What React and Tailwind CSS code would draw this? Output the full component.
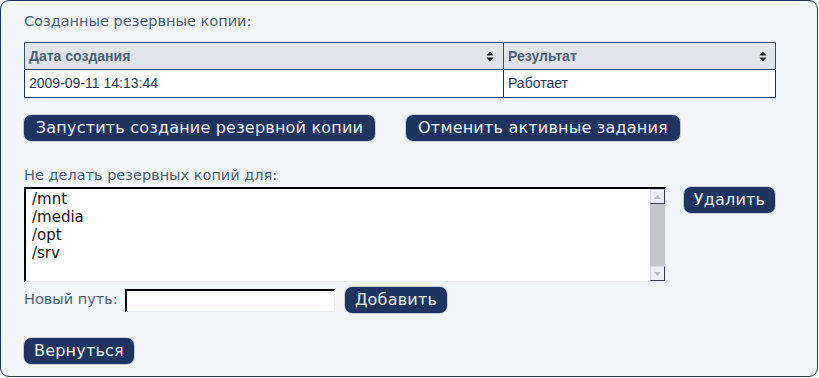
import React from "react";

const BTN =
  "h-[26px] rounded-[7px] bg-[#1d3461] px-[8px] text-[16px] leading-[26px] tracking-[0.2px] text-[#eef2f7] font-['DejaVu_Sans',sans-serif] shadow-[0_0_0_1px_#c9d0da] whitespace-nowrap";

function SortIcon() {
  return (
    <svg width="8" height="11" viewBox="0 0 8 11" className="shrink-0">
      <path d="M4 0.5 L7.5 4.5 H0.5 Z" fill="#222" />
      <path d="M4 10.5 L7.5 6.5 H0.5 Z" fill="#222" />
    </svg>
  );
}

const paths = ["/mnt", "/media", "/opt", "/srv"];

export default function App() {
  return (
    <div className="h-[378px] w-[819px] bg-white">
      <div className="h-[377px] w-[818px] rounded-[9px] border border-[#1d3461] bg-[#f3f6f8] pl-[23px] pt-[11px] font-['DejaVu_Sans',sans-serif] text-[#4b6076]">
        <div className="text-[14.5px] leading-[18px]">Созданные резервные копии:</div>

        <table className="mt-[12px] w-[752px] border-collapse font-['Liberation_Sans',sans-serif] text-[14px]">
          <thead>
            <tr className="h-[27px] bg-[#e1e4e9]">
              <th className="w-[479px] border border-[#34506d] px-[4px] text-left font-bold text-[#4b6076]">
                <div className="flex items-center justify-between pr-[5px]">
                  <span>Дата создания</span>
                  <SortIcon />
                </div>
              </th>
              <th className="border border-[#34506d] px-[4px] text-left font-bold text-[#4b6076]">
                <div className="flex items-center justify-between pr-[4px]">
                  <span>Результат</span>
                  <SortIcon />
                </div>
              </th>
            </tr>
          </thead>
          <tbody>
            <tr className="h-[28px] bg-white text-[#1d3461]">
              <td className="border border-[#1d3461] px-[4px]">2009-09-11 14:13:44</td>
              <td className="border border-[#1d3461] px-[4px]">Работает</td>
            </tr>
          </tbody>
        </table>

        <div className="mt-[17px] flex gap-[31px]">
          <button className={`${BTN} w-[351px]`}>Запустить создание резервной копии</button>
          <button className={`${BTN} w-[274px]`}>Отменить активные задания</button>
        </div>

        <div className="mt-[25px] text-[14.5px] leading-[18px]">Не делать резервных копий для:</div>

        <div className="mt-[3px] flex items-start gap-[18px]">
          <div className="flex h-[95px] w-[642px] border-t-2 border-l-2 border-t-black border-l-black border-b border-r border-b-[#e8ebef] border-r-[#e8ebef] bg-white">
            <div className="flex-1 pl-[6px] pt-[1px] text-[15px] leading-[18px] text-[#111]">
              {paths.map((p) => (
                <div key={p}>{p}</div>
              ))}
            </div>
            <div className="flex w-[15px] flex-col bg-[#c6c7cc]">
              <div className="flex h-[15px] items-center justify-center border border-[#3b3b55] border-t-[#d8d8ee] border-l-[#d8d8ee] bg-[#eeeef5]">
                <svg width="7" height="4" viewBox="0 0 7 4"><path d="M3.5 0 L7 4 H0 Z" fill="#bfbfd0" /></svg>
              </div>
              <div className="flex-1" />
              <div className="flex h-[15px] items-center justify-center border border-[#3b3b55] border-t-[#d8d8ee] border-l-[#d8d8ee] bg-[#eeeef5]">
                <svg width="7" height="4" viewBox="0 0 7 4"><path d="M0 0 H7 L3.5 4 Z" fill="#bfbfd0" /></svg>
              </div>
            </div>
          </div>
          <button className={`${BTN} w-[91px]`}>Удалить</button>
        </div>

        <div className="mt-[5px] flex items-center">
          <span className="w-[101px] text-[14.5px]">Новый путь:</span>
          <div className="h-[23px] w-[210px] border-t-2 border-l-2 border-t-black border-l-black border-b border-r border-b-[#e8ebef] border-r-[#e8ebef] bg-white" />
          <button className={`${BTN} ml-[10px] w-[102px]`}>Добавить</button>
        </div>

        <button className={`${BTN} mt-[25px] w-[110px]`}>Вернуться</button>
      </div>
    </div>
  );
}
